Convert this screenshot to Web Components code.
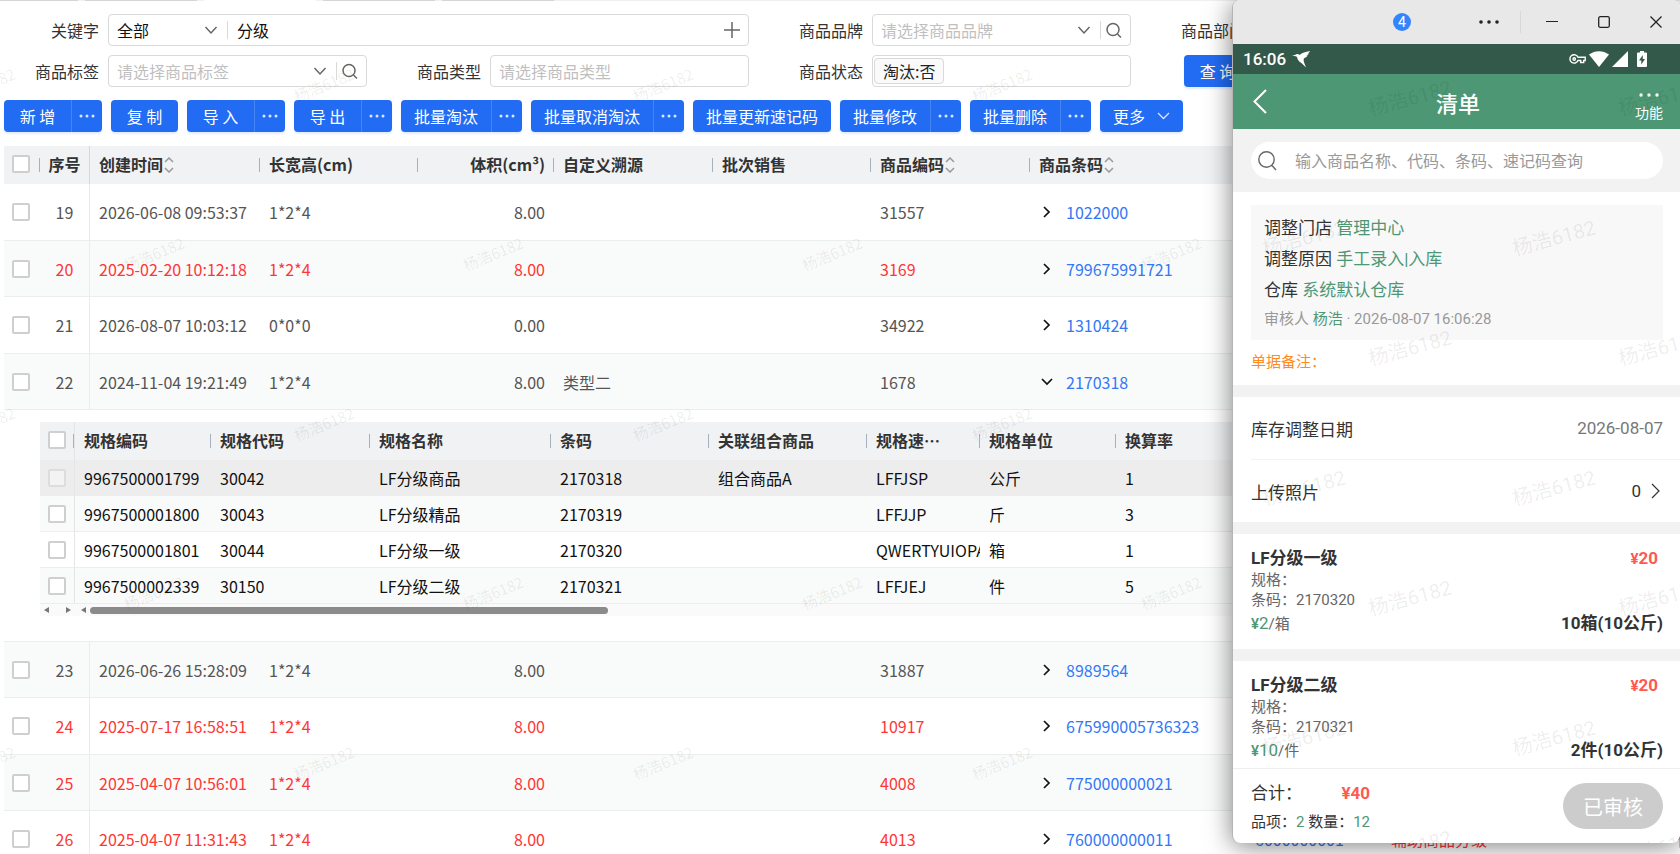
<!DOCTYPE html>
<html lang="zh-CN">
<head>
<meta charset="utf-8">
<meta name="viewport" content="width=device-width, initial-scale=1">
<title>商品档案</title>
<style>
  body {
    margin: 0;
    background: #ffffff;
    font-family: "Noto Sans CJK SC", sans-serif;
    font-size: 16px;
  }
</style>
</head>
<body>
<goods-page></goods-page>

<template id="goods-page">
  <style>
    :host {
      display: block;
      position: relative;
      height: 100vh;
      overflow: hidden;
    }
    .tabs {
      display: flex;
      gap: 7px;
      height: 1px;
      background: #f0f0f0;
    }
    .tabs i {
      width: 112px;
      background: #d6d6d6;
    }
    .tabs i:first-child {
      width: 78px;
    }
    .tabs i.active {
      background: #ffffff;
    }
    .filters {
      display: grid;
      grid-template-columns: repeat(4, 1fr);
      gap: 9px 15px;
      padding: 13px 167px 13px 0;
    }
    .filters .wide {
      grid-column: span 2;
    }
    .search {
      padding-left: 38px;
    }
    .toolbar {
      display: flex;
      gap: 9px;
      padding: 0 4px 14px;
    }
    goods-table {
      margin-left: 4px;
    }
    phone-window {
      position: absolute;
      top: 0;
      right: 0;
      bottom: 11px;
      width: 448px;
    }
  </style>
  <div class="tabs"><i></i><i></i><i class="active"></i><i></i><i></i></div>
  <div class="filters">
    <filter-field class="wide" label="关键字" kind="keyword" value="分级"></filter-field>
    <filter-field label="商品品牌" kind="picker" placeholder="请选择商品品牌"></filter-field>
    <filter-field label="商品部门" kind="picker" placeholder="请选择商品部门"></filter-field>
    <filter-field label="商品标签" kind="picker" placeholder="请选择商品标签"></filter-field>
    <filter-field label="商品类型" kind="text" placeholder="请选择商品类型"></filter-field>
    <filter-field label="商品状态" kind="tags" value="淘汰:否"></filter-field>
    <div class="search"><tool-button>查 询</tool-button></div>
  </div>
  <div class="toolbar">
    <tool-button menu>新 增</tool-button>
    <tool-button>复 制</tool-button>
    <tool-button menu>导 入</tool-button>
    <tool-button menu>导 出</tool-button>
    <tool-button menu>批量淘汰</tool-button>
    <tool-button menu>批量取消淘汰</tool-button>
    <tool-button>批量更新速记码</tool-button>
    <tool-button menu>批量修改</tool-button>
    <tool-button menu>批量删除</tool-button>
    <tool-button arrow>更多</tool-button>
  </div>
  <goods-table></goods-table>
  <water-mark step="339" ax="324" ay="85" bx="154" by="254" angle="-22" size="15"></water-mark>
  <phone-window></phone-window>
</template>

<template id="tool-button">
  <style>
    :host {
      display: inline-flex;
      height: 32px;
      border-radius: 4px;
      background: #226bf3;
      box-shadow: 0 2px 2px rgba(34, 107, 243, .12);
    }
    button {
      display: flex;
      align-items: center;
      justify-content: center;
      gap: 12px;
      min-width: 67px;
      padding: 0 13px;
      border: 0;
      background: none;
      color: #ffffff;
      font: inherit;
      line-height: 32px;
      white-space: nowrap;
      cursor: pointer;
    }
    .menu {
      min-width: 31px;
      padding: 0;
      border-left: 1px solid #4784f6;
    }
    svg {
      fill: #dbe7fe;
    }
    [hidden] {
      display: none;
    }
    .arrow {
      fill: none;
      stroke: #dbe7fe;
      stroke-width: 1.300;
    }
  </style>
  <button type="button"><slot></slot><svg class="arrow" hidden width="13" height="8"><path d="M1 1l5.500 5.500L12 1"/></svg></button>
  <button type="button" class="menu" aria-label="更多操作" hidden>
    <svg width="16" height="4"><circle cx="2" cy="2" r="1.500"/><circle cx="8" cy="2" r="1.500"/><circle cx="14" cy="2" r="1.500"/></svg>
  </button>
</template>

<template id="filter-field">
  <style>
    :host {
      display: flex;
      align-items: center;
      gap: 9px;
      color: #333333;
    }
    label {
      flex: none;
      width: 99px;
      text-align: right;
      white-space: nowrap;
    }
    .box {
      display: flex;
      flex: 1;
      align-items: center;
      box-sizing: border-box;
      min-width: 0;
      height: 32px;
      padding: 0 8px;
      border: 1px solid #d9d9d9;
      border-radius: 4px;
      background: #ffffff;
    }
    .box.tags {
      padding: 0 1px;
    }
    input,
    select {
      flex: 1;
      min-width: 0;
      padding: 0;
      border: 0;
      outline: 0;
      background: none;
      color: #111111;
      font: inherit;
      line-height: 24px;
      appearance: none;
    }
    input::placeholder,
    .picker select {
      color: #bfbfbf;
      opacity: 1;
    }
    .keyword select {
      flex: none;
      width: 87px;
    }
    .line {
      width: 1px;
      height: 18px;
      margin: 0 9px;
      background: #d9d9d9;
    }
    .picker .line {
      margin-right: 5px;
    }
    .tag {
      padding: 0 8px;
      border: 1px solid #d9d9d9;
      border-radius: 4px;
      background: #fafafa;
      color: #222222;
      line-height: 24px;
    }
    button {
      display: flex;
      padding: 0;
      border: 0;
      background: none;
    }
    svg {
      fill: none;
      stroke: #666666;
      stroke-width: 1.500;
    }
  </style>
  <label for="control"></label>
  <div class="box"></div>
</template>

<template id="phone-window">
  <style>
    :host {
      display: flex;
      flex-direction: column;
      box-sizing: border-box;
      border-left: 1px solid #b4b4b4;
      border-radius: 8px;
      overflow: hidden;
      background: #ffffff;
      box-shadow: 0 3px 26px rgba(0, 0, 0, .5);
      color: #333333;
      font-family: Roboto, "Noto Sans CJK SC", sans-serif;
      font-size: 17px;
    }
    button {
      padding: 0;
      border: 0;
      background: none;
      color: inherit;
      font: inherit;
    }
    svg {
      display: block;
      fill: none;
      stroke: currentColor;
    }
    .titlebar {
      display: flex;
      flex: none;
      align-items: center;
      justify-content: flex-end;
      gap: 4px;
      height: 44px;
      background: #e8e8e8;
      color: #222222;
    }
    .titlebar button {
      display: flex;
      align-items: center;
      justify-content: center;
      width: 48px;
      height: 44px;
    }
    .titlebar hr {
      width: 1px;
      height: 22px;
      margin: 0 3px;
      border: 0;
      background: #d8d8d8;
    }
    .count {
      width: 18px;
      margin-right: 50px;
      border-radius: 9px;
      background: #3385ff;
      color: #ffffff;
      font-size: 14px;
      line-height: 18px;
      text-align: center;
    }
    .status {
      display: flex;
      flex: none;
      align-items: center;
      gap: 3px;
      height: 30px;
      padding: 0 33px 0 10px;
      background: #33594b;
      color: #ffffff;
      font-weight: 500;
    }
    .status span {
      margin-right: 3px;
    }
    .status .bird {
      margin-right: auto;
    }
    .status svg {
      fill: #ffffff;
      stroke: none;
    }
    .status .battery {
      margin-left: 6px;
    }
    header {
      display: grid;
      grid-template-columns: 1fr auto 1fr;
      align-items: center;
      flex: none;
      height: 55px;
      padding: 0 17px 0 20px;
      background: #4d9774;
      color: #ffffff;
    }
    h1 {
      margin: 6px 0 0;
      font-size: 22px;
      font-weight: 500;
      line-height: 32px;
    }
    header .more {
      display: flex;
      flex-direction: column;
      align-items: center;
      justify-self: end;
      gap: 6px;
      padding-top: 12px;
      font-size: 14px;
      line-height: 20px;
    }
    header .more svg {
      fill: #ffffff;
      stroke: none;
    }
    .find {
      flex: none;
      padding: 13px 17px 13px 18px;
      background: #f2f2f2;
    }
    .find label {
      display: flex;
      align-items: center;
      gap: 18px;
      height: 37px;
      padding: 0 7px;
      border-radius: 19px;
      background: #ffffff;
      color: #666666;
    }
    .find input {
      flex: 1;
      min-width: 0;
      padding: 2px 0 0;
      border: 0;
      outline: 0;
      background: none;
      font: inherit;
      font-size: 16px;
    }
    .find input::placeholder {
      color: #999999;
      opacity: 1;
    }
    main {
      display: flex;
      flex: 1;
      flex-direction: column;
      gap: 12px;
      min-height: 0;
      overflow: hidden;
      background: #f2f2f2;
    }
    section {
      flex: none;
      padding: 0 17px 0 18px;
      background: #ffffff;
    }
    .info {
      margin-top: 13px;
      padding: 8px 13px;
      background: #f8f8f8;
      line-height: 31px;
    }
    .info p,
    .remark {
      margin: 0;
    }
    em {
      color: #4d9774;
      font-style: normal;
    }
    .info small {
      display: block;
      color: #999999;
      font-size: 15px;
      line-height: 26px;
    }
    .remark {
      color: #ff8a1f;
      font-size: 15px;
      line-height: 45px;
    }
    .rows {
      padding-right: 0;
    }
    .row {
      display: flex;
      align-items: center;
      gap: 10px;
      height: 62px;
      padding-right: 17px;
    }
    .row + .row {
      padding-right: 20px;
      border-top: 1px solid #f2f2f2;
    }
    .row span:first-child {
      margin-right: auto;
    }
    .date {
      color: #777777;
    }
    footer {
      display: flex;
      flex: none;
      align-items: center;
      justify-content: space-between;
      box-sizing: border-box;
      height: 75px;
      padding: 0 17px 0 18px;
      border-top: 1px solid #eeeeee;
    }
    .total {
      display: flex;
      justify-content: space-between;
      line-height: 31px;
    }
    .total b {
      color: #ff5a52;
      font-weight: 700;
    }
    .sum {
      font-size: 15px;
      line-height: 26px;
    }
    .done {
      width: 100px;
      height: 46px;
      border-radius: 23px;
      background: #cccccc;
      color: #ffffff;
      font-size: 20px;
    }
  </style>
  <div class="titlebar">
    <span class="count">4</span>
    <button type="button" aria-label="菜单"><svg width="20" height="4"><g fill="currentColor" stroke="none"><circle cx="2" cy="2" r="1.800"/><circle cx="10" cy="2" r="1.800"/><circle cx="18" cy="2" r="1.800"/></g></svg></button>
    <hr>
    <button type="button" aria-label="最小化"><svg width="12" height="12"><path d="M0 5.500h12"/></svg></button>
    <button type="button" aria-label="最大化"><svg width="12" height="12" stroke-width="1.300"><rect x=".7" y=".7" width="10.600" height="10.600" rx="1.500"/></svg></button>
    <button type="button" aria-label="关闭"><svg width="12" height="12" stroke-width="1.300"><path d="M.5 .5l11 11M11.500 .5l-11 11"/></svg></button>
  </div>
  <div class="status">
    <span>16:06</span>
    <svg class="bird" width="18" height="17" viewBox="0 0 18 17"><path d="M0 5l4-1.500c1.200-.8 2.600-.6 3.600.6C10 1.800 13.500.8 18 0c-.7 1.400-1.200 1.800-2.300 2.300L17 2.600c-.8 1.200-1.500 1.500-2.500 1.800l1.200.2c-1 1.400-2.200 2.200-3.900 2.800-.3 1.300-.2 2.500.2 3.800l2 5.300-4.300-4.200C7 10.800 5.500 8.700 5 6 4 5 2 4.800 0 5z"/></svg>
    <svg width="17" height="10" viewBox="0 0 17 10" style="fill: none; stroke: #ffffff; stroke-width: 1.400"><path d="M9 3.300h7.200v3.200h-1.500v2h-3v-2H9A4.200 4.200 0 1 1 9 3.300z"/><circle cx="5.200" cy="5" r="1.200"/></svg>
    <svg width="20" height="16" viewBox="0 0 20 16"><path d="M0 3.500C6-1 14-1 20 3.500L10 16z"/></svg>
    <svg width="16" height="16" viewBox="0 0 16 16"><path d="M0 16L16 0v16z"/></svg>
    <svg class="battery" width="10" height="16" viewBox="0 0 10 16"><path fill-rule="evenodd" d="M3 0h4v1.500h2a1 1 0 0 1 1 1V15a1 1 0 0 1-1 1H1a1 1 0 0 1-1-1V2.500a1 1 0 0 1 1-1h2zM5.800 4L2 9.500h2.300V13.500L8 8H5.800z"/></svg>
  </div>
  <header>
    <button type="button" aria-label="返回"><svg width="14" height="25" stroke-width="2"><path d="M13 1L1.500 12.500 13 24"/></svg></button>
    <h1>清单</h1>
    <button type="button" class="more"><svg width="20" height="4"><circle cx="2" cy="2" r="1.700"/><circle cx="10" cy="2" r="1.700"/><circle cx="18" cy="2" r="1.700"/></svg>功能</button>
  </header>
  <div class="find">
    <label><svg width="19" height="20" stroke-width="1.400"><circle cx="8.500" cy="8.500" r="7.700"/><path d="M14 14.500l4 4.500"/></svg><input type="search" aria-label="搜索商品" placeholder="输入商品名称、代码、条码、速记码查询"></label>
  </div>
  <main>
    <section>
      <div class="info">
        <p>调整门店 <em>管理中心</em></p>
        <p>调整原因 <em>手工录入|入库</em></p>
        <p>仓库 <em>系统默认仓库</em></p>
        <small>审核人 <em>杨浩</em> · 2026-08-07 16:06:28</small>
      </div>
      <p class="remark">单据备注：</p>
    </section>
    <section class="rows">
      <div class="row"><span>库存调整日期</span><span class="date">2026-08-07</span></div>
      <div class="row"><span>上传照片</span><span>0</span><svg width="9" height="16" stroke-width="1.200"><path d="M1 1l7 7-7 7"/></svg></div>
    </section>
    <section><bill-item name="LF分级一级" code="2170320" price="2" unit="箱" amount="20" quantity="10箱(10公斤)"></bill-item></section>
    <section><bill-item name="LF分级二级" code="2170321" price="10" unit="件" amount="20" quantity="2件(10公斤)"></bill-item></section>
  </main>
  <footer>
    <div>
      <div class="total"><span>合计：</span><b>¥40</b></div>
      <div class="sum">品项：<em>2</em> 数量：<em>12</em></div>
    </div>
    <button type="button" class="done">已审核</button>
  </footer>
  <water-mark step="250" ax="177" ay="98" bx="71" by="238" angle="-15" size="20"></water-mark>
</template>

<script>
const svg = {
  down: '<svg width="14" height="9"><path d="M1.500 1l5.500 6 5.500-6"/></svg>',
  search: '<svg width="16" height="17"><circle cx="7" cy="7.500" r="6"/><path d="M11.500 12l3.500 3.500"/></svg>',
  plus: '<svg width="16" height="16"><path d="M8 0v16M0 8h16"/></svg>',
  sort: '<svg class="sort" width="10" height="16"><path d="M1 5l4-4 4 4M1 11l4 4 4-4"/></svg>',
};

const checkboxStyle = `
  input[type="checkbox"] {
    display: block;
    width: 18px;
    height: 18px;
    margin: 0;
    border: 2px solid #cfcfcf;
    border-radius: 2px;
    background: #ffffff;
    appearance: none;
  }
  input[type="checkbox"]:disabled {
    border-color: #dddddd;
    background: #f3f3f3;
  }
`;

class BaseElement extends HTMLElement {
  constructor() {
    super();

    this.attachShadow({ mode: 'open' });

    const template = document.getElementById(this.localName);

    if (template) {
      this.shadowRoot.appendChild(template.content.cloneNode(true));
    }
  }
}

class ToolButton extends BaseElement {
  connectedCallback() {
    if (this.hasAttribute('menu')) {
      this.shadowRoot.querySelector('.menu').removeAttribute('hidden');
    }
    if (this.hasAttribute('arrow')) {
      this.shadowRoot.querySelector('.arrow').removeAttribute('hidden');
    }
  }
}

class FilterField extends BaseElement {
  connectedCallback() {
    const kind = this.getAttribute('kind');
    const value = this.getAttribute('value') || '';
    const placeholder = this.getAttribute('placeholder') || '';
    const box = this.shadowRoot.querySelector('.box');

    this.shadowRoot.querySelector('label').textContent = this.getAttribute('label');
    box.classList.add(kind);

    switch (kind) {
      case 'keyword': {
        box.innerHTML = `<select aria-label="关键字范围"><option>全部</option></select>${svg.down}<i class="line"></i>
          <input id="control" value="${value}"><button type="button" aria-label="添加">${svg.plus}</button>`;
        break;
      }
      case 'picker': {
        box.innerHTML = `<select id="control"><option>${placeholder}</option></select>${svg.down}<i class="line"></i>
          <button type="button" aria-label="搜索">${svg.search}</button>`;
        break;
      }
      case 'tags': {
        box.innerHTML = `<span class="tag">${value}</span><input id="control">`;
        break;
      }
      default: {
        box.innerHTML = `<input id="control" placeholder="${placeholder}">`;
        break;
      }
    }
  }
}

const goods = [
  ['19', '2026-06-08 09:53:37', '1*2*4', '8.00', '', '31557', '1022000'],
  ['20', '2025-02-20 10:12:18', '1*2*4', '8.00', '', '3169', '799675991721', 'red'],
  ['21', '2026-08-07 10:03:12', '0*0*0', '0.00', '', '34922', '1310424'],
  ['22', '2024-11-04 19:21:49', '1*2*4', '8.00', '类型二', '1678', '2170318', 'open'],
  ['23', '2026-06-26 15:28:09', '1*2*4', '8.00', '', '31887', '8989564'],
  ['24', '2025-07-17 16:58:51', '1*2*4', '8.00', '', '10917', '675990005736323', 'red'],
  ['25', '2025-04-07 10:56:01', '1*2*4', '8.00', '', '4008', '775000000021', 'red'],
  ['26', '2025-04-07 11:31:43', '1*2*4', '8.00', '', '4013', '760000000011', 'red', '6000000001', '辅助商品分级', '件'],
];

class GoodsTable extends BaseElement {
  connectedCallback() {
    this.shadowRoot.innerHTML = `
      <style>
        :host {
          display: block;
        }
        table {
          width: 100%;
          table-layout: fixed;
          border-collapse: separate;
          border-spacing: 0;
          color: #555555;
        }
        th,
        td {
          box-sizing: border-box;
          padding: 0 0 0 9px;
          overflow: hidden;
          text-align: left;
          white-space: nowrap;
        }
        th {
          height: 38px;
          padding-bottom: 2px;
          background: linear-gradient(#a9b0bd, #a9b0bd) right center / 1px 14px no-repeat #f0f2f4;
          color: #333333;
          font-weight: 700;
        }
        td {
          height: 57px;
          border-bottom: 1px solid #eceeee;
        }
        tr:nth-child(even) td {
          height: 56px;
          background: #f9fbfa;
        }
        th:first-child,
        td:first-child {
          padding-left: 8px;
        }
        th.seq,
        td.seq {
          padding-left: 0;
          border-right: 1px solid #ebebeb;
          text-align: center;
        }
        th.seq {
          border-color: #d5d8dc;
          background: #f0f2f4;
        }
        .num {
          padding-right: 9px;
          text-align: right;
        }
        .red {
          color: #ff3636;
        }
        td.detail {
          height: 232px;
          padding: 12px 0 0 36px;
          vertical-align: top;
        }
        tr td.detail:first-child {
          padding-left: 36px;
        }
        .code {
          display: flex;
          align-items: center;
          gap: 11px;
        }
        .code svg {
          fill: none;
          stroke: #111111;
          stroke-width: 1.700;
        }
        .sort {
          margin-left: 1px;
          vertical-align: -2px;
          fill: none;
          stroke: #999999;
          stroke-width: 1.500;
        }
        a {
          color: #3478f6;
          text-decoration: none;
        }
        ${checkboxStyle}
      </style>
      <table>
        <colgroup>
          ${[36, 50, 170, 158, 136, 159, 158, 159, 216, 136, 286].map((width) => `<col style="width: ${width}px">`).join('')}
          <col>
        </colgroup>
        <thead>
          <tr>
            <th><input type="checkbox" aria-label="全选"></th>
            <th class="seq">序号</th>
            <th>创建时间${svg.sort}</th>
            <th>长宽高(cm)</th>
            <th class="num">体积(cm³)</th>
            <th>自定义溯源</th>
            <th>批次销售</th>
            <th>商品编码${svg.sort}</th>
            <th>商品条码${svg.sort}</th>
            <th></th>
            <th></th>
            <th></th>
          </tr>
        </thead>
        <tbody>${goods.map((row) => this.renderRow(row)).join('')}</tbody>
      </table>
    `;
  }

  renderRow([seq, time, size, volume, trace, number, code, state = '', extra = '', group = '', unit = '']) {
    const arrow = state === 'open' ? 'M3 5l5 5 5-5' : 'M5 3l5 5-5 5';
    const detail = state === 'open' ? '<tr><td class="detail" colspan="12"><spec-table></spec-table></td></tr>' : '';

    return `
      <tr class="${state}">
        <td><input type="checkbox" aria-label="选择 ${seq}"></td>
        <td class="seq">${seq}</td>
        <td>${time}</td>
        <td>${size}</td>
        <td class="num">${volume}</td>
        <td>${trace}</td>
        <td></td>
        <td>${number}</td>
        <td><div class="code"><svg width="16" height="16"><path d="${arrow}"/></svg><a href="#">${code}</a></div></td>
        <td>${extra ? `<a href="#">${extra}</a>` : ''}</td>
        <td>${group}</td>
        <td>${unit}</td>
      </tr>${detail}
    `;
  }
}

const specs = [
  ['9967500001799', '30042', 'LF分级商品', '2170318', '组合商品A', 'LFFJSP', '公斤', '1'],
  ['9967500001800', '30043', 'LF分级精品', '2170319', '', 'LFFJJP', '斤', '3'],
  ['9967500001801', '30044', 'LF分级一级', '2170320', '', 'QWERTYUIOPA', '箱', '1'],
  ['9967500002339', '30150', 'LF分级二级', '2170321', '', 'LFFJEJ', '件', '5'],
];

class SpecTable extends BaseElement {
  connectedCallback() {
    const titles = ['规格编码', '规格代码', '规格名称', '条码', '关联组合商品', '规格速…', '规格单位', '换算率'];

    this.shadowRoot.innerHTML = `
      <style>
        :host {
          display: block;
          color: #111111;
        }
        table {
          width: 100%;
          table-layout: fixed;
          border-collapse: separate;
          border-spacing: 0;
        }
        th,
        td {
          box-sizing: border-box;
          padding: 0 0 0 9px;
          overflow: hidden;
          text-align: left;
          text-overflow: clip;
          white-space: nowrap;
        }
        th {
          height: 38px;
          padding-bottom: 2px;
          background: linear-gradient(#a9b0bd, #a9b0bd) right center / 1px 14px no-repeat #f0f2f4;
          color: #333333;
          font-weight: 700;
        }
        td {
          height: 36px;
          border-bottom: 1px solid #eceeee;
        }
        th:first-child,
        td:first-child {
          padding-left: 8px;
          border-right: 1px solid #e3e5e8;
        }
        tr:nth-child(even) td {
          background: #f9fbfa;
        }
        tr.disabled td {
          background: #ededed;
        }
        .bar {
          display: flex;
          align-items: center;
          height: 12px;
          background: #fafafa;
        }
        .bar svg {
          fill: #777777;
        }
        .corner {
          display: flex;
          justify-content: space-between;
          width: 27px;
          padding: 0 5px 0 4px;
          margin-right: 5px;
        }
        .thumb {
          width: 518px;
          height: 7px;
          margin-left: 4px;
          border-radius: 4px;
          background: #8b8b8b;
        }
        ${checkboxStyle}
      </style>
      <table>
        <colgroup>
          ${[35, 136, 159, 181, 158, 158, 113, 136].map((width) => `<col style="width: ${width}px">`).join('')}
          <col>
        </colgroup>
        <thead><tr><th><input type="checkbox" aria-label="全选规格"></th>${titles.map((title) => `<th>${title}</th>`).join('')}</tr></thead>
        <tbody>${specs.map((row, index) => `
          <tr class="${index ? '' : 'disabled'}">
            <td><input type="checkbox" aria-label="选择 ${row[0]}" ${index ? '' : 'disabled'}></td>
            ${row.map((text) => `<td>${text}</td>`).join('')}
          </tr>`).join('')}
        </tbody>
      </table>
      <div class="bar">
        <span class="corner">
          <svg width="5" height="6"><path d="M5 0v6L0 3z"/></svg>
          <svg width="5" height="6"><path d="M0 0v6l5-3z"/></svg>
        </span>
        <svg width="5" height="6"><path d="M5 0v6L0 3z"/></svg>
        <span class="thumb"></span>
      </div>
    `;
  }
}

class BillItem extends BaseElement {
  connectedCallback() {
    const get = (name) => this.getAttribute(name);

    this.shadowRoot.innerHTML = `
      <style>
        :host {
          display: block;
          padding: 13px 0 11px;
          color: #666666;
          font-size: 15px;
          line-height: 20px;
        }
        .line {
          display: flex;
          justify-content: space-between;
          font-size: 17px;
          line-height: 22px;
        }
        .bottom {
          line-height: 27px;
        }
        b {
          color: #333333;
          font-weight: 700;
        }
        .amount {
          padding-right: 5px;
          color: #ff5a52;
        }
        .price {
          color: #4d9774;
        }
        .sign,
        .unit {
          font-size: 15px;
        }
        .price .sign {
          font-weight: 500;
        }
      </style>
      <div class="line"><b>${get('name')}</b><b class="amount"><span class="sign">¥</span>${get('amount')}</b></div>
      <div>规格：</div>
      <div>条码：${get('code')}</div>
      <div class="line bottom"><span><span class="price"><span class="sign">¥</span>${get('price')}</span><span class="unit">/${get('unit')}</span></span><b>${get('quantity')}</b></div>
    `;
  }
}

class WaterMark extends BaseElement {
  connectedCallback() {
    const [step, ax, ay, bx, by, angle, size] = ['step', 'ax', 'ay', 'bx', 'by', 'angle', 'size']
      .map((name) => Number(this.getAttribute(name)));

    this.shadowRoot.innerHTML = `
      <style>
        :host {
          display: block;
          position: absolute;
          inset: 0;
          overflow: hidden;
          pointer-events: none;
          color: rgba(0, 0, 0, .08);
          font-size: ${size}px;
          line-height: 20px;
        }
        span {
          position: absolute;
          transform: translate(-50%, -50%) rotate(${angle}deg);
          white-space: nowrap;
        }
      </style>
      <div></div>
    `;

    const width = this.offsetWidth;
    const height = this.offsetHeight;

    // two interleaved lattices of marks
    const marks = [[ax, ay], [bx, by]].flatMap(([startX, startY]) => {
      const points = [];

      for (let y = startY; y < height + 10; y += step) {
        for (let x = startX - step; x < width + 30; x += step) {
          if (x > -30) {
            points.push(`<span style="left: ${x}px; top: ${y}px">杨浩6182</span>`);
          }
        }
      }

      return points;
    });

    this.shadowRoot.querySelector('div').innerHTML = marks.join('');
  }
}

customElements.define('tool-button', ToolButton);
customElements.define('filter-field', FilterField);
customElements.define('spec-table', SpecTable);
customElements.define('goods-table', GoodsTable);
customElements.define('bill-item', BillItem);
customElements.define('phone-window', class extends BaseElement {});
customElements.define('goods-page', class extends BaseElement {});
// last, so that the boxes it measures are already laid out
customElements.define('water-mark', WaterMark);
</script>
</body>
</html>
